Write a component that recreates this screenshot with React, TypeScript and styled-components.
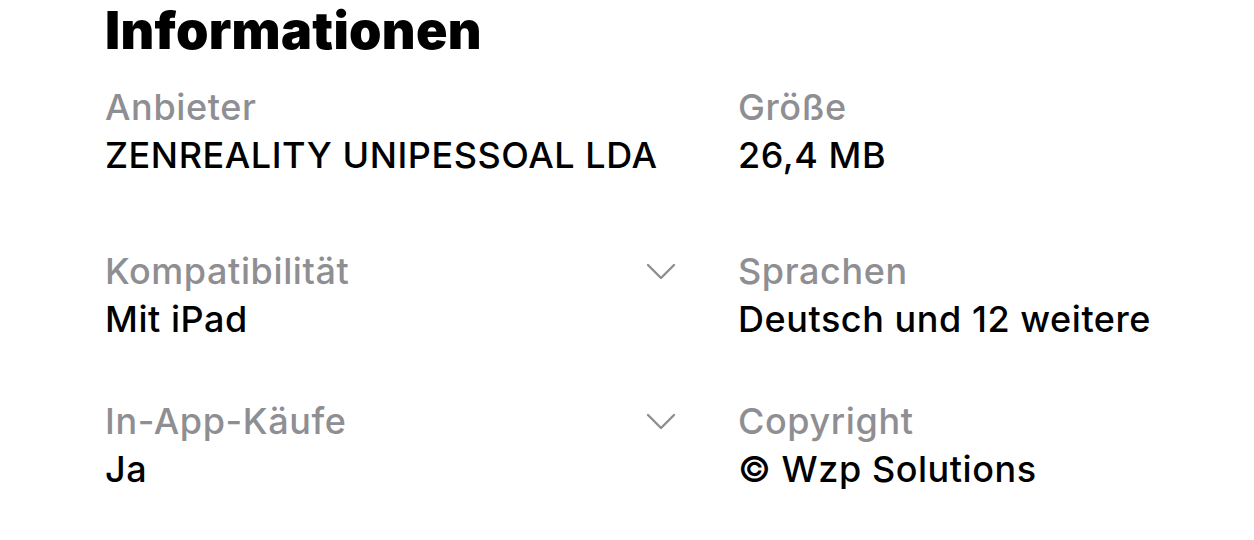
import styled, { createGlobalStyle } from "styled-components";

const GlobalStyle = createGlobalStyle`
  body {
    margin: 0;
    background: #ffffff;
    font-family: Inter, "Noto Sans", sans-serif;
    -webkit-font-smoothing: antialiased;
  }
`;

const Page = styled.div`
  padding: 0 0 0 105px;
  width: 1254px;
  height: 540px;
  box-sizing: border-box;
  overflow: hidden;
`;

const Title = styled.h1`
  margin: 0;
  font-size: 52px;
  line-height: 62px;
  font-weight: 900;
  color: #000;
  letter-spacing: 0.3px;
`;

const InfoGrid = styled.div`
  display: grid;
  grid-template-columns: 571px 1fr;
  column-gap: 62px;
  margin-top: 21px;
`;

const Cell = styled.div<{ $space: number }>`
  display: flex;
  align-items: flex-start;
  margin-bottom: ${(p) => p.$space}px;
`;

const Texts = styled.div`
  flex: 1;
  display: flex;
  flex-direction: column;
`;

const Label = styled.span`
  font-size: 36px;
  line-height: 48px;
  color: #8e8e93;
  font-weight: 500;
  letter-spacing: 0.6px;
`;

const Value = styled.span`
  font-size: 36px;
  line-height: 48px;
  color: #000;
  font-weight: 500;
  letter-spacing: 0.55px;
`;

const Chevron = styled.svg`
  width: 30px;
  height: 20px;
  margin-top: 15px;
  flex-shrink: 0;
`;

type Info = { label: string; value: string; expandable?: boolean };

const rows: { left: Info; right: Info; space: number }[] = [
  {
    left: { label: "Anbieter", value: "ZENREALITY UNIPESSOAL LDA" },
    right: { label: "Größe", value: "26,4 MB" },
    space: 68,
  },
  {
    left: { label: "Kompatibilität", value: "Mit iPad", expandable: true },
    right: { label: "Sprachen", value: "Deutsch und 12 weitere" },
    space: 54,
  },
  {
    left: { label: "In-App-Käufe", value: "Ja", expandable: true },
    right: { label: "Copyright", value: "© Wzp Solutions" },
    space: 0,
  },
];

function InfoCell({ info, space }: { info: Info; space: number }) {
  return (
    <Cell $space={space}>
      <Texts>
        <Label>{info.label}</Label>
        <Value>{info.value}</Value>
      </Texts>
      {info.expandable && (
        <Chevron viewBox="0 0 30 20">
          <path
            d="M2 3 L15 16 L28 3"
            fill="none"
            stroke="#8e8e93"
            strokeWidth="2.4"
            strokeLinecap="round"
            strokeLinejoin="round"
          />
        </Chevron>
      )}
    </Cell>
  );
}

export default function App() {
  return (
    <>
      <GlobalStyle />
      <Page>
        <Title>Informationen</Title>
        <InfoGrid>
          {rows.flatMap((r) => [
            <InfoCell key={r.left.label} info={r.left} space={r.space} />,
            <InfoCell key={r.right.label} info={r.right} space={r.space} />,
          ])}
        </InfoGrid>
      </Page>
    </>
  );
}
